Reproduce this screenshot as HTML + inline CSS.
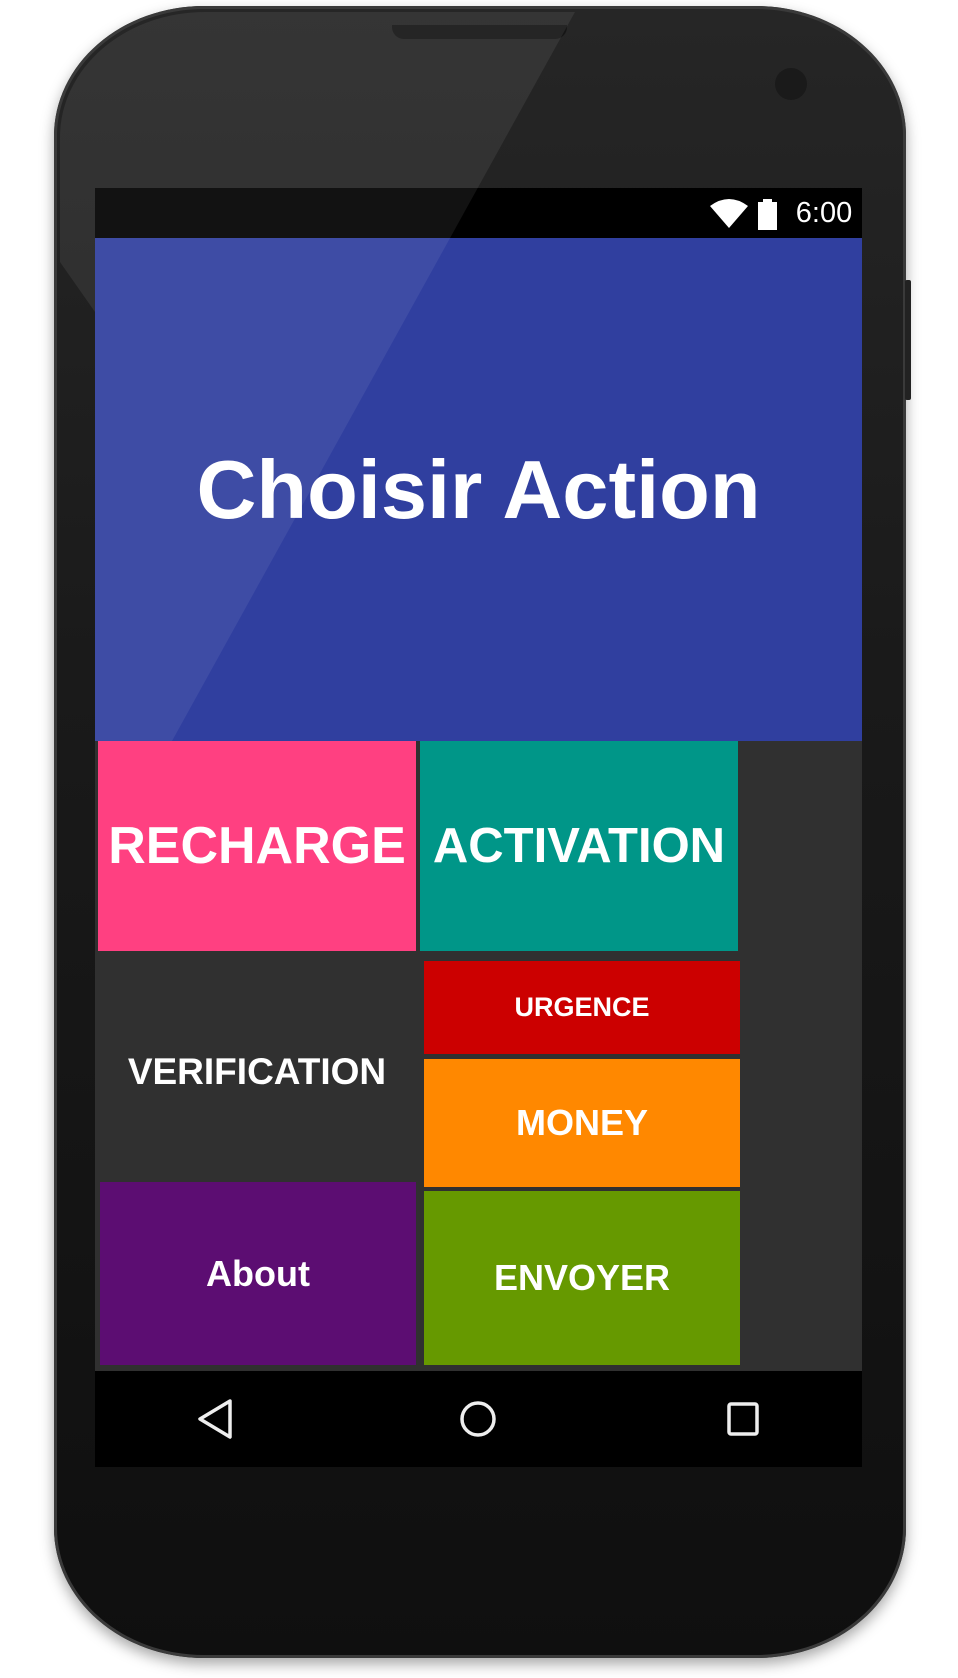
<!DOCTYPE html>
<html><head><meta charset="utf-8"><style>
html,body{margin:0;padding:0;background:#fff;width:958px;height:1678px;overflow:hidden;font-family:"Liberation Sans",sans-serif}
.abs{position:absolute}
.phone{left:54px;top:6px;width:852px;height:1652px;border-radius:150px/130px;background:linear-gradient(#262626,#1a1a1a 40%,#0f0f0f 100%);box-shadow:0 0 0 3px #3a3a3a inset,0 6px 14px rgba(0,0,0,.35);overflow:hidden}
.t{color:#fff;font-weight:bold;display:flex;align-items:center;justify-content:center;white-space:nowrap}
</style></head><body>
<div class="abs phone"></div>
<div class="abs" style="left:392px;top:25px;width:175px;height:14px;background:#151515;border-radius:0 0 12px 12px"></div>
<div class="abs" style="left:775px;top:68px;width:32px;height:32px;border-radius:50%;background:#1a1a1a"></div>
<div class="abs" style="left:905px;top:280px;width:6px;height:120px;background:#222;border-radius:2px"></div>
<!-- screen -->
<div class="abs" style="left:95px;top:188px;width:767px;height:50px;background:#000"></div>
<div class="abs t" style="left:789px;top:188px;width:70px;height:50px;font-weight:normal;font-size:29px">6:00</div>
<svg class="abs" style="left:706px;top:196px" width="80" height="36"><path d="M4 10 Q23 -4 42 10 L23 32 Z" fill="#fff"/><rect x="52" y="6" width="19" height="28" fill="#fff"/><rect x="57" y="3" width="9" height="4" fill="#fff"/></svg>
<div class="abs t" style="left:95px;top:238px;width:767px;height:503px;background:#303f9f;font-size:83px">Choisir Action</div>
<div class="abs" style="left:95px;top:741px;width:767px;height:630px;background:#303030"></div>
<div class="abs t" style="left:98px;top:741px;width:318px;height:210px;background:#ff4081;font-size:52px">RECHARGE</div>
<div class="abs t" style="left:420px;top:741px;width:318px;height:210px;background:#009688;font-size:49px">ACTIVATION</div>
<div class="abs t" style="left:98px;top:961px;width:318px;height:221px;font-size:37px">VERIFICATION</div>
<div class="abs t" style="left:424px;top:961px;width:316px;height:93px;background:#cc0000;font-size:27px">URGENCE</div>
<div class="abs t" style="left:424px;top:1059px;width:316px;height:128px;background:#ff8800;font-size:36px">MONEY</div>
<div class="abs t" style="left:424px;top:1191px;width:316px;height:174px;background:#669900;font-size:36px">ENVOYER</div>
<div class="abs t" style="left:100px;top:1182px;width:316px;height:183px;background:#5c0d72;font-size:36px">About</div>
<div class="abs" style="left:95px;top:1371px;width:767px;height:96px;background:#000"></div>
<svg class="abs" style="left:95px;top:1371px" width="767" height="96">
<path d="M135 30 L105 48 L135 66 Z" fill="none" stroke="#eee" stroke-width="3.5" stroke-linejoin="round"/>
<circle cx="383" cy="48" r="16" fill="none" stroke="#eee" stroke-width="3.5"/>
<rect x="634" y="33" width="28" height="30" rx="2" fill="none" stroke="#eee" stroke-width="3.5"/>
</svg>
<!-- glare, clipped to phone shape -->
<div class="abs" style="left:60px;top:12px;width:840px;height:1640px;border-radius:145px/125px;overflow:hidden;pointer-events:none">
<svg width="840" height="1640" style="display:block"><polygon points="0,0 515,0 112,729 35,729 35,300 0,250" fill="#fff" opacity="0.07"/></svg>
</div>
</body></html>
